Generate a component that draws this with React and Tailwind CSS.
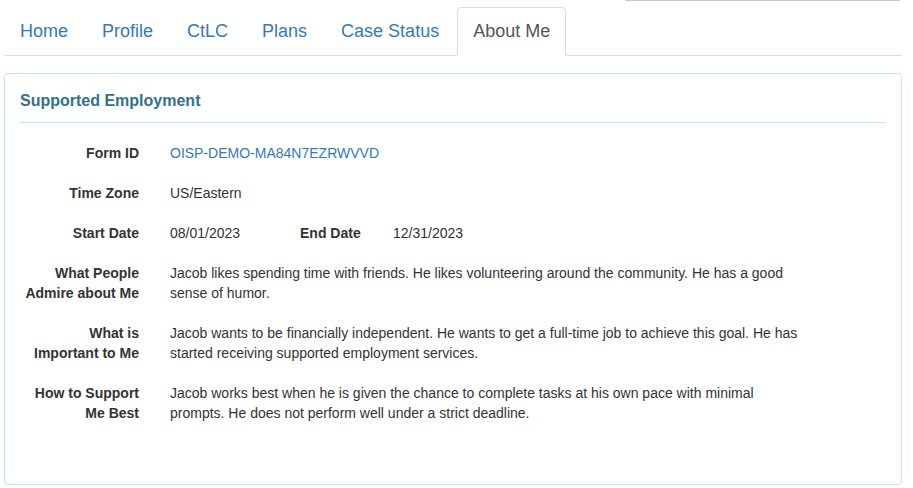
const tabs = ["Home", "Profile", "CtLC", "Plans", "Case Status", "About Me"];

const Row = ({ label, children }) => (
  <div className="flex">
    <div className="w-[150px] shrink-0 pr-[31px] text-right font-bold leading-5">{label}</div>
    <div className="w-[638px] leading-5">{children}</div>
  </div>
);

export default function App() {
  return (
    <div className="min-h-[488px] bg-white text-[14px] text-[#333]" style={{ fontFamily: '"Liberation Sans", Arial, sans-serif' }}>
      <div className="flex justify-end">
        <div className="mr-[13px] h-px w-[275px] bg-[#c8c8c8]" />
      </div>

      <div className="ml-[4px] mr-[11px] mt-[6px]">
        <ul className="flex border-b border-[#ddd]">
          {tabs.map((t) => {
            const active = t === "About Me";
            return (
              <li key={t} className="-mb-px mr-[2px]">
                <a
                  className={
                    active
                      ? "block rounded-t-[4px] border border-[#ddd] border-b-transparent bg-white px-[15px] py-[10px] text-[18px] leading-[27px] text-[#555]"
                      : "block rounded-t-[4px] border border-transparent px-[15px] py-[10px] text-[18px] leading-[27px] text-[#337ab7]"
                  }
                >
                  {t}
                </a>
              </li>
            );
          })}
        </ul>

        <div className="mt-[17px] h-[412px] rounded-[4px] border border-[#bce8f1] px-[15px]">
          <h3 className="border-b border-[#bce8f1] pb-[10px] pt-[16px] text-[16px] font-bold leading-[22px] text-[#31708f]">
            Supported Employment
          </h3>

          <div className="mt-[20px] flex flex-col gap-5">
            <Row label="Form ID">
              <a className="text-[#337ab7]">OISP-DEMO-MA84N7EZRWVVD</a>
            </Row>
            <Row label="Time Zone">US/Eastern</Row>
            <Row label="Start Date">
              <div className="flex">
                <span className="w-[130px]">08/01/2023</span>
                <span className="w-[93px] font-bold">End Date</span>
                <span>12/31/2023</span>
              </div>
            </Row>
            <Row label={<>What People<br />Admire about Me</>}>
              Jacob likes spending time with friends. He likes volunteering around the community. He has a good sense of humor.
            </Row>
            <Row label={<>What is<br />Important to Me</>}>
              Jacob wants to be financially independent. He wants to get a full-time job to achieve this goal. He has started receiving supported employment services.
            </Row>
            <Row label={<>How to Support<br />Me Best</>}>
              Jacob works best when he is given the chance to complete tasks at his own pace with minimal prompts. He does not perform well under a strict deadline.
            </Row>
          </div>
        </div>
      </div>
    </div>
  );
}
